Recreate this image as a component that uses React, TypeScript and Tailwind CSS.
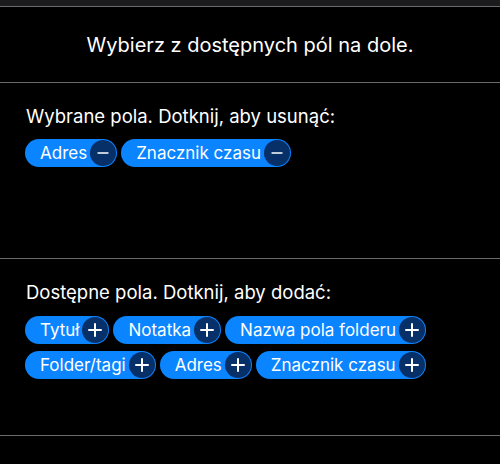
import React from 'react';

const selected = ['Adres', 'Znacznik czasu'];
const available = ['Tytuł', 'Notatka', 'Nazwa pola folderu', 'Folder/tagi', 'Adres', 'Znacznik czasu'];

const Chip = ({ label, kind }: { label: string; kind: 'add' | 'remove' }) => (
  <button className="flex h-[28px] items-center rounded-full bg-[#0a84ff] pl-[15px] pr-px text-[17px] leading-none text-white">
    <span className="mr-[3px]">{label}</span>
    <span className="flex h-[26px] w-[26px] items-center justify-center rounded-full bg-[#073068]">
      <svg width="16" height="16" viewBox="0 0 16 16" stroke="white" strokeLinecap="round">
        {kind === 'add' ? (
          <>
            <line x1="2" y1="8" x2="14" y2="8" strokeWidth="2" />
            <line x1="8" y1="2" x2="8" y2="14" strokeWidth="2" />
          </>
        ) : (
          <line x1="3" y1="8" x2="13" y2="8" strokeWidth="1.4" />
        )}
      </svg>
    </span>
  </button>
);

export default function App() {
  return (
    <div className="min-h-[464px] w-[500px] bg-black font-['Inter',sans-serif] text-white">
      <div className="h-[6px] bg-[#1c1c1e]" />
      <div className="h-px bg-[#6b6b6b]" />
      <div className="flex h-[75px] items-center justify-center text-[20px]">
        Wybierz z dostępnych pól na dole.
      </div>
      <div className="h-px bg-[#6b6b6b]" />
      <section className="h-[175px] px-[25px] pt-[22px]">
        <p className="pl-px text-[18.5px] leading-[22px]">Wybrane pola. Dotknij, aby usunąć:</p>
        <div className="mt-[12px] flex flex-wrap gap-x-[4px] gap-y-[7px]">
          {selected.map((s) => (
            <Chip key={s} label={s} kind="remove" />
          ))}
        </div>
      </section>
      <div className="h-px bg-[#6b6b6b]" />
      <section className="h-[176px] px-[25px] pt-[22px]">
        <p className="pl-px text-[18.5px] leading-[22px]">Dostępne pola. Dotknij, aby dodać:</p>
        <div className="mt-[13px] flex w-[410px] flex-wrap gap-x-[4px] gap-y-[7px]">
          {available.map((s) => (
            <Chip key={s} label={s} kind="add" />
          ))}
        </div>
      </section>
      <div className="h-px bg-[#6b6b6b]" />
    </div>
  );
}
